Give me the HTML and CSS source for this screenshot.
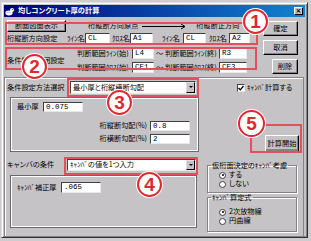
FILE: index.html
```html
<!DOCTYPE html>
<html lang="ja">
<head>
  <meta charset="UTF-8" />
  <title>均しコンクリート厚の計算</title>
  <link rel="stylesheet" href="styles.css">
</head>
<body>

  <div class="window">
    <div class="titlebar">
      <svg class="app-icon" width="10" height="9" viewBox="0 0 10 9">
        <ellipse cx="4" cy="6" rx="3.6" ry="2.4" fill="#fff"/>
        <circle cx="7" cy="3" r="2" fill="#fff"/>
        <path d="M8.6 2.6 L10 3.2 L8.6 3.8 Z" fill="#e0c040"/>
        <circle cx="7.3" cy="2.6" r="0.5" fill="#000"/>
        <path d="M1.5 5.5 Q4 4.5 6 6" stroke="#9090a0" stroke-width="0.6" fill="none"/>
      </svg>
      <span class="title-text">均しコンクリート厚の計算</span>
      <span class="close-btn">×</span>
    </div>

    <!-- upper section -->
    <div class="top">
      <div class="top-left">
        <div class="row-a">
          <div class="btn btn-view">断面図面表示</div>
          <span class="head-from">桁縦断方向原点</span>
          <svg class="arrow" width="44" height="7" viewBox="0 0 44 7">
            <line x1="0" y1="3.5" x2="43" y2="3.5" stroke="#000" stroke-width="1"/>
            <path d="M39 1 L43 3.5 L39 6" stroke="#000" stroke-width="1" fill="none"/>
          </svg>
          <span class="head-to">桁縦断正方向</span>
        </div>

        <div class="row-b">
          <span class="row-title">桁縦断方向設定</span>
          <span class="lbl w18">ﾗｲﾝ名</span>
          <span class="field w25">CL</span>
          <span class="lbl w18 ml2">ｸﾛｽ名</span>
          <span class="field w23">A1</span>
          <span class="lbl w21 ml9">ﾗｲﾝ名</span>
          <span class="field w23">CL</span>
          <span class="lbl w20 ml3">ｸﾛｽ名</span>
          <span class="field w21">A2</span>
        </div>

        <div class="range">
          <span class="range-title">条件判断範囲設定</span>
          <div class="range-rows">
            <div class="range-row">
              <span class="lbl w55">判断範囲ﾗｲﾝ(始)</span>
              <span class="field w22">L4</span>
              <span class="tilde">～</span>
              <span class="lbl w54">判断範囲ﾗｲﾝ(終)</span>
              <span class="field w28">R3</span>
            </div>
            <div class="range-row">
              <span class="lbl w55">判断範囲ｸﾛｽ(始)</span>
              <span class="field w22">CE1</span>
              <span class="tilde">～</span>
              <span class="lbl w54">判断範囲ｸﾛｽ(終)</span>
              <span class="field w28">CE3</span>
            </div>
          </div>
        </div>
      </div>

      <div class="top-btns">
        <div class="btn btn-ok">確定</div>
        <div class="btn btn-cancel">取消</div>
        <div class="btn btn-delete">削除</div>
      </div>
    </div>

    <!-- lower section -->
    <div class="lower">
      <div class="lower-left">
        <div class="row-method">
          <span class="method-title">条件設定方法選択</span>
          <div class="combo w126">
            <span class="combo-text">最小厚と桁縦横断勾配</span>
            <span class="combo-drop"></span>
          </div>
        </div>

        <div class="panel panel-thick">
          <div class="p-row p-min">
            <span class="lbl w26">最小厚</span>
            <span class="field w40">0.075</span>
          </div>
          <div class="p-row p-slope">
            <span class="lbl">桁縦断勾配(%)</span>
            <span class="field w40">0.8</span>
          </div>
          <div class="p-row p-slope2">
            <span class="lbl">桁横断勾配(%)</span>
            <span class="field w40">2</span>
          </div>
        </div>

        <div class="row-camber">
          <span class="camber-title">キャンバの条件</span>
          <div class="combo w129">
            <span class="combo-text">ｷｬﾝﾊﾞの値を1つ入力</span>
            <span class="combo-drop"></span>
          </div>
        </div>

        <div class="panel panel-camber">
          <div class="p-row p-corr">
            <span class="lbl w44">ｷｬﾝﾊﾞ補正厚</span>
            <span class="field w40 h11">.065</span>
          </div>
        </div>
      </div>

      <div class="lower-right">
        <div class="check-row">
          <span class="checkbox">
            <svg width="6" height="6" viewBox="0 0 6 6">
              <path d="M0.5 3 L2.3 4.8 L5.5 1" stroke="#000" stroke-width="1.3" fill="none"/>
            </svg>
          </span>
          <span>ｷｬﾝﾊﾞ計算する</span>
        </div>

        <div class="btn btn-calc">計算開始</div>

        <fieldset class="group group-1">
          <legend>仮桁面決定のｷｬﾝﾊﾞ考慮</legend>
          <div class="radio-row"><span class="radio on"></span>する</div>
          <div class="radio-row"><span class="radio"></span>しない</div>
        </fieldset>

        <fieldset class="group group-2">
          <legend>ｷｬﾝﾊﾞ算定式</legend>
          <div class="radio-row"><span class="radio on"></span>2次放物線</div>
          <div class="radio-row"><span class="radio"></span>円曲線</div>
        </fieldset>
      </div>
    </div>

    <!-- red annotations drawn over the dialog -->
    <div class="mark-box box-1"></div>
    <div class="mark-box box-2"></div>
    <div class="mark-box box-3"></div>
    <div class="mark-box box-4"></div>
    <div class="mark-box box-5"></div>
    <div class="mark-num num-1">1</div>
    <div class="mark-num num-2">2</div>
    <div class="mark-num num-3">3</div>
    <div class="mark-num num-4">4</div>
    <div class="mark-num num-5">5</div>
  </div>

</body>
</html>
```

FILE: styles.css
```css
* {
  box-sizing: border-box;
}

body {
  margin: 0;
  padding: 2px 0 0 1px;
  background-color: #cfcccf;
  font-family: "Noto Sans CJK JP", sans-serif;
  font-size: 7.2px;
  line-height: 1;
  color: #000;
  font-feature-settings: "palt";
}

.window {
  position: relative;
  width: 307px;
  height: 236px;
  background-color: #c6c3c6;
  border: 1px solid;
  border-color: #e0dee0 #303030 #303030 #e0dee0;
  box-shadow: inset 1px 1px 0 #fff, inset -1px -1px 0 #848284;
  padding: 2px 2px 1px 2px;
  display: flex;
  flex-direction: column;
}

/* title bar */
.titlebar {
  height: 12px;
  flex: none;
  display: flex;
  align-items: center;
  padding-left: 1px;
  background: linear-gradient(90deg, #00007b, #1084d0);
}

.app-icon {
  margin-right: 3px;
}

.title-text {
  color: #fff;
  font-weight: bold;
  white-space: nowrap;
}

.close-btn {
  margin-left: auto;
  margin-right: 2px;
  width: 9px;
  height: 8px;
  background-color: #c6c3c6;
  border: 1px solid;
  border-color: #fff #000 #000 #fff;
  font-family: "DejaVu Sans", sans-serif;
  font-size: 7px;
  line-height: 6px;
  text-align: center;
  font-weight: bold;
}

/* common controls */
.btn {
  display: flex;
  align-items: center;
  justify-content: center;
  background-color: #c6c3c6;
  border: 1px solid;
  border-color: #fff #000 #000 #fff;
  box-shadow: inset -1px -1px 0 #848284;
  white-space: nowrap;
}

.lbl {
  white-space: nowrap;
  flex: none;
}

.field {
  flex: none;
  height: 11px;
  background-color: #fff;
  border: 1px solid;
  border-color: #404040 #e8e8e8 #e8e8e8 #404040;
  font-family: "Liberation Mono", monospace;
  font-size: 7.5px;
  line-height: 9px;
  padding-left: 2px;
  white-space: nowrap;
}

.combo {
  flex: none;
  display: flex;
  align-items: stretch;
  background-color: #fff;
  border: 1px solid;
  border-color: #404040 #e8e8e8 #e8e8e8 #404040;
}

.combo-text {
  flex: 1;
  padding-left: 2px;
  display: flex;
  align-items: center;
  white-space: nowrap;
}

.combo-drop {
  width: 9px;
  background-color: #c6c3c6;
  border: 1px solid;
  border-color: #e0dee0 #000 #000 #e0dee0;
  position: relative;
}

.combo-drop::after {
  content: "";
  position: absolute;
  left: 2px;
  top: 3px;
  border-left: 2px solid transparent;
  border-right: 2px solid transparent;
  border-top: 2px solid #000;
}

.w18 { width: 18px; }
.w20 { width: 20px; }
.w21 { width: 21px; }
.w22 { width: 22px; }
.w23 { width: 23px; }
.w25 { width: 25px; }
.w26 { width: 26px; }
.w28 { width: 28px; }
.w40 { width: 40px; }
.w44 { width: 44px; }
.w54 { width: 54px; }
.w55 { width: 55px; }
.w126 { width: 126px; }
.w129 { width: 129px; }
.ml2 { margin-left: 2px; }
.ml3 { margin-left: 3px; }
.ml9 { margin-left: 9px; }

/* upper section */
.top {
  height: 60px;
  flex: none;
  display: flex;
}

.top-left {
  width: 259px;
  padding-left: 3px;
  display: flex;
  flex-direction: column;
}

.row-a {
  margin-top: 3px;
  height: 12px;
  display: flex;
  align-items: center;
}

.btn-view {
  width: 59px;
  height: 12px;
}

.head-from {
  margin-left: 22px;
  white-space: nowrap;
}

.arrow {
  margin-left: 4px;
}

.head-to {
  margin-left: 10px;
  white-space: nowrap;
}

.row-b {
  margin-top: 1px;
  height: 11px;
  display: flex;
  align-items: center;
}

.row-title {
  width: 60px;
  flex: none;
  white-space: nowrap;
}

.range {
  margin-top: 4px;
  display: flex;
}

.range-title {
  width: 70px;
  flex: none;
  align-self: center;
  white-space: nowrap;
}

.range-rows {
  display: flex;
  flex-direction: column;
  gap: 3px;
}

.range-row {
  height: 11px;
  display: flex;
  align-items: center;
}

.tilde {
  width: 11px;
  text-align: center;
}

.top-btns {
  width: 35px;
  display: flex;
  flex-direction: column;
  align-items: flex-end;
}

.btn-ok, .btn-cancel {
  width: 35px;
  height: 15px;
  margin-top: 4px;
}

.btn-delete {
  width: 26px;
  height: 15px;
  margin-top: 4px;
}

/* lower section */
.lower {
  height: 159px;
  flex: none;
  margin-right: 1px;
  display: flex;
  border: 1px solid #848284;
  border-bottom: none;
  box-shadow: inset 1px 1px 0 #fff;
}

.lower-left {
  width: 194px;
  padding-left: 2px;
  display: flex;
  flex-direction: column;
}

.row-method {
  margin-top: 3px;
  height: 13px;
  display: flex;
  align-items: center;
}

.row-method .combo {
  height: 13px;
}

.method-title {
  width: 63px;
  flex: none;
  white-space: nowrap;
}

.panel {
  margin-left: 3px;
  border: 1px solid #6b696b;
  box-shadow: inset 1px 1px 0 #fff, inset -1px -1px 0 #fff;
  display: flex;
  flex-direction: column;
}

.panel-thick {
  margin-top: 3px;
  width: 189px;
  height: 55px;
}

.p-row {
  display: flex;
  align-items: center;
}

.p-row .field {
  height: 10px;
  line-height: 8px;
}

.p-row .field.h11 {
  height: 11px;
  line-height: 9px;
}

.p-min {
  margin-top: 4px;
  padding-left: 6px;
}

.p-slope, .p-slope2 {
  justify-content: flex-end;
  padding-right: 8px;
}

.p-slope .lbl, .p-slope2 .lbl {
  margin-right: 3px;
}

.p-slope {
  margin-top: 9px;
}

.p-slope2 {
  margin-top: 3px;
}

.row-camber {
  margin-top: 7px;
  height: 12px;
  display: flex;
  align-items: center;
}

.row-camber .combo {
  height: 12px;
}

.camber-title {
  width: 60px;
  flex: none;
  white-space: nowrap;
}

.panel-camber {
  margin-top: 4px;
  width: 187px;
  height: 53px;
}

.p-corr {
  margin-top: 6px;
  padding-left: 6px;
}

.lower-right {
  margin-left: 8px;
  width: 92px;
  display: flex;
  flex-direction: column;
}

.check-row {
  margin-top: 5px;
  height: 9px;
  padding-left: 30px;
  display: flex;
  align-items: center;
  white-space: nowrap;
}

.checkbox {
  width: 8px;
  height: 8px;
  margin-right: 2px;
  background-color: #fff;
  border: 1px solid;
  border-color: #404040 #e8e8e8 #e8e8e8 #404040;
  display: flex;
  align-items: center;
  justify-content: center;
}

.btn-calc {
  margin-top: 43px;
  align-self: flex-end;
  width: 34px;
  height: 17px;
  border-color: #fff #000 #000 #fff;
  box-shadow: inset -1px -2px 0 #848284;
}

.group {
  margin: 0;
  width: 90px;
  padding: 0 0 0 11px;
  border: 1px solid #848284;
  box-shadow: inset 1px 1px 0 #fff, 1px 1px 0 #fff;
  display: flex;
  flex-direction: column;
  gap: 1px;
}

.group legend {
  margin-left: -8px;
  padding: 0 1px;
  line-height: 8px;
  white-space: nowrap;
}

.group-1 {
  margin-top: 9px;
  height: 32px;
  padding-top: 2px;
}

.group-2 {
  height: 39px;
  padding-top: 7px;
}

.radio-row {
  height: 8px;
  display: flex;
  align-items: center;
  white-space: nowrap;
}

.radio {
  width: 7px;
  height: 7px;
  margin-right: 3px;
  border-radius: 50%;
  background-color: #fff;
  border: 1px solid #404040;
  position: relative;
}

.radio.on::after {
  content: "";
  position: absolute;
  left: 1.5px;
  top: 1.5px;
  width: 2px;
  height: 2px;
  border-radius: 50%;
  background-color: #000;
}

/* red annotation marks */
.mark-box {
  position: absolute;
  border: 2px solid #e2505c;
}

.box-1 { left: 3px; top: 19px; width: 253px; height: 23px; }
.box-2 { left: 3px; top: 44px; width: 252px; height: 23px; }
.box-3 { left: 65px; top: 75px; width: 132px; height: 19px; }
.box-4 { left: 62px; top: 154px; width: 134px; height: 18px; }
.box-5 { left: 248px; top: 121px; width: 52px; height: 29px; }

.mark-num {
  position: absolute;
  width: 25px;
  height: 25px;
  border-radius: 50%;
  border: 2.5px solid #e02830;
  background-color: #fff;
  box-shadow: 0 0 0 1px #fff;
  color: #e02830;
  font-family: "Liberation Sans", sans-serif;
  font-weight: bold;
  font-size: 19px;
  display: flex;
  align-items: center;
  justify-content: center;
}

.num-1 { left: 241px; top: 6px; }
.num-2 { left: 20px; top: 51px; }
.num-3 { left: 105px; top: 87px; }
.num-4 { left: 135px; top: 169px; }
.num-5 { left: 236px; top: 107px; width: 27px; height: 27px; }
```
